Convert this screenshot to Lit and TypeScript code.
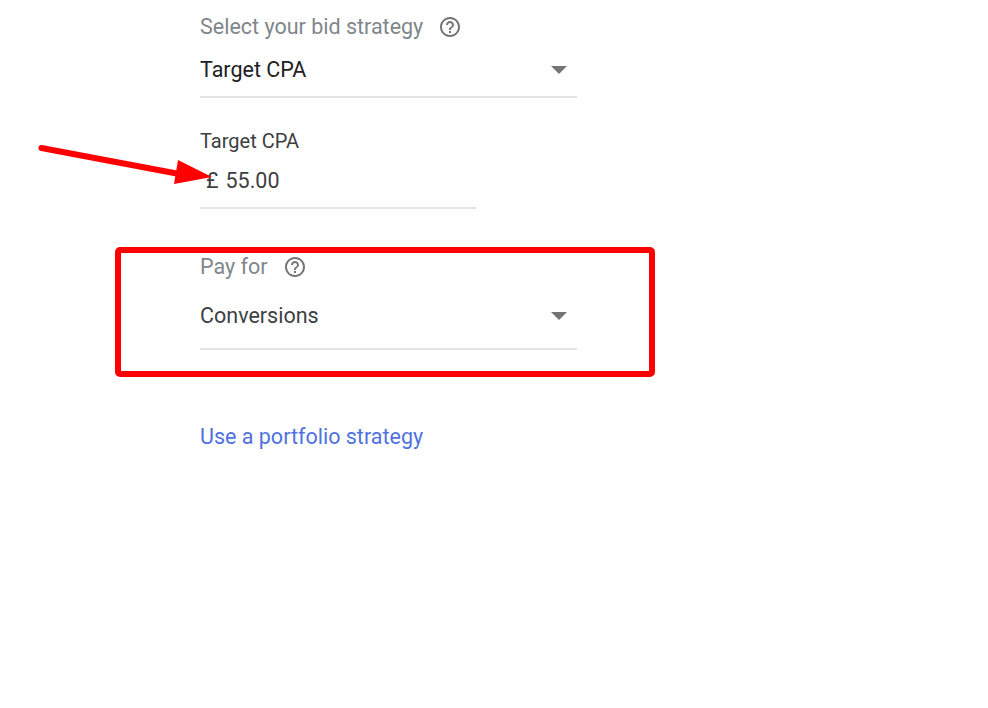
import { LitElement, html, css, svg } from "lit";
import { customElement } from "lit/decorators.js";

const help = html`<svg class="help" viewBox="0 0 24 24" aria-hidden="true">
  <path fill="#757575" d="M11 18h2v-2h-2v2zm1-16C6.48 2 2 6.48 2 12s4.48 10 10 10 10-4.48 10-10S17.52 2 12 2zm0 18c-4.41 0-8-3.59-8-8s3.59-8 8-8 8 3.59 8 8-3.59 8-8 8zm0-14c-2.21 0-4 1.79-4 4h2c0-1.1.9-2 2-2s2 .9 2 2c0 2-3 1.75-3 5h2c0-2.25 3-2.5 3-5 0-2.21-1.79-4-4-4z"/>
</svg>`;

const annotations = svg`
  <line x1="41.5" y1="148" x2="182" y2="174.5" stroke="#ff0000" stroke-width="6" stroke-linecap="round"/>
  <polygon points="178,160 212,177 174,184" fill="#ff0000"/>
  <rect x="118" y="250" width="534" height="124" rx="2" fill="none" stroke="#ff0000" stroke-width="6"/>
`;

@customElement("app-root")
export class AppRoot extends LitElement {
  static styles = css`
    :host {
      display: block;
      position: relative;
      width: 988px;
      height: 708px;
      overflow: hidden;
      background: #fff;
      font-family: Roboto, "Liberation Sans", sans-serif;
      font-size: 21.5px;
      color: #3c4043;
    }
    .form {
      display: flex;
      flex-direction: column;
      align-items: flex-start;
      padding: 14px 0 0 200px;
    }
    .label {
      display: flex;
      align-items: center;
      gap: 15px;
      height: 26px;
      line-height: 26px;
      color: #80868b;
    }
    .help {
      width: 24px;
      height: 24px;
      display: block;
    }
    .select {
      display: flex;
      align-items: center;
      justify-content: space-between;
      box-sizing: border-box;
      width: 377px;
      border-bottom: 2px solid #e4e4e4;
      padding-right: 10px;
      line-height: 26px;
    }
    .caret {
      width: 0;
      height: 0;
      border-left: 8px solid transparent;
      border-right: 8px solid transparent;
      border-top: 8px solid #757575;
    }
    .strategy { height: 58px; padding-top: 4px; margin-top: 0; color: #202124; }
    .strategy-wrap { margin-bottom: 30px; }
    .cpa-label { line-height: 26px; height: 26px; font-size: 20px; }
    .cpa {
      box-sizing: border-box;
      width: 276px;
      height: 54px;
      margin-top: 1px;
      padding: 13px 0 0 6px;
      line-height: 26px;
      border-bottom: 2px solid #e4e4e4;
      display: flex;
      gap: 7px;
    }
    .pay { margin-top: 45px; }
    .conversions { height: 70px; padding-top: 4px; }
    .link {
      margin-top: 74px;
      line-height: 26px;
      color: #4f72e0;
      text-decoration: none;
    }
    .overlay {
      position: absolute;
      inset: 0;
      width: 988px;
      height: 708px;
      pointer-events: none;
    }
  `;

  render() {
    return html`
      <div class="form">
        <div class="label">Select your bid strategy ${help}</div>
        <div class="select strategy">Target CPA <span class="caret"></span></div>
        <div class="cpa-label" style="margin-top:30px">Target CPA</div>
        <div class="cpa"><span>£</span><span>55.00</span></div>
        <div class="label pay">Pay for ${help}</div>
        <div class="select conversions">Conversions <span class="caret"></span></div>
        <a class="link" href="#">Use a portfolio strategy</a>
      </div>
      <svg class="overlay" viewBox="0 0 988 708" aria-hidden="true">${annotations}</svg>
    `;
  }
}
